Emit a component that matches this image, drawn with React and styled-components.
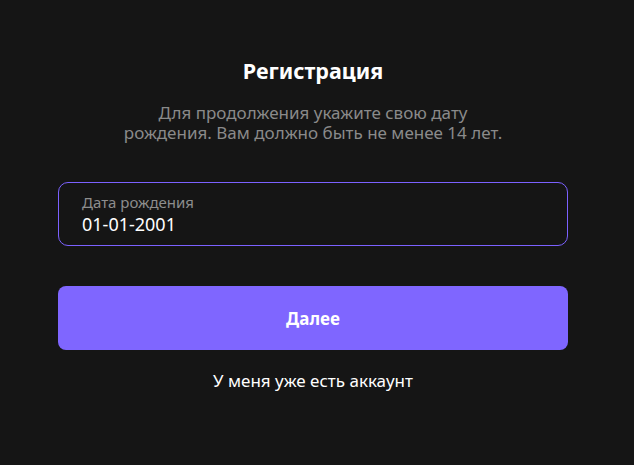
import React, { useState } from "react";
import styled, { createGlobalStyle } from "styled-components";

const GlobalStyle = createGlobalStyle`
  html, body {
    margin: 0;
    padding: 0;
    background: #151515;
  }
  body {
    font-family: "Noto Sans", "Liberation Sans", sans-serif;
    -webkit-font-smoothing: antialiased;
  }
`;

const Page = styled.div`
  width: 634px;
  height: 465px;
  box-sizing: border-box;
  background: #151515;
  padding: 57px 66px 0 58px;
  display: flex;
  flex-direction: column;
  align-items: stretch;
`;

const Title = styled.h1`
  margin: 0;
  font-size: 21.5px;
  line-height: 28px;
  font-weight: 700;
  color: #ffffff;
  text-align: center;
`;

const Subtitle = styled.p`
  margin: 18px auto 0;
  width: 384px;
  font-size: 17px;
  line-height: 20px;
  color: #8a8a8a;
  text-align: center;
`;

const Field = styled.label`
  margin-top: 39px;
  height: 64px;
  box-sizing: border-box;
  border: 1px solid #7b61ff;
  border-radius: 10px;
  padding: 10px 23px 0;
  display: flex;
  flex-direction: column;
  gap: 1px;
  cursor: text;
`;

const FieldLabel = styled.span`
  font-size: 15px;
  line-height: 19px;
  color: #8d8d8d;
`;

const FieldInput = styled.input`
  border: none;
  outline: none;
  background: transparent;
  padding: 0;
  font-family: inherit;
  font-size: 18px;
  line-height: 23px;
  color: #ffffff;
`;

const PrimaryButton = styled.button`
  margin-top: 40px;
  height: 64px;
  border: none;
  border-radius: 8px;
  background: #7f66ff;
  color: #ffffff;
  font-family: inherit;
  font-size: 17px;
  font-weight: 700;
  cursor: pointer;
`;

const LinkButton = styled.button`
  margin-top: 20px;
  align-self: center;
  border: none;
  background: none;
  padding: 0;
  color: #ffffff;
  font-family: inherit;
  font-size: 17px;
  line-height: 22px;
  cursor: pointer;
`;

export default function App() {
  const [birthday, setBirthday] = useState("01-01-2001");

  return (
    <>
      <GlobalStyle />
      <Page>
        <Title>Регистрация</Title>
        <Subtitle>
          Для продолжения укажите свою дату рождения. Вам должно быть не менее 14 лет.
        </Subtitle>
        <Field>
          <FieldLabel>Дата рождения</FieldLabel>
          <FieldInput
            value={birthday}
            onChange={(e) => setBirthday(e.target.value)}
          />
        </Field>
        <PrimaryButton>Далее</PrimaryButton>
        <LinkButton>У меня уже есть аккаунт</LinkButton>
      </Page>
    </>
  );
}
